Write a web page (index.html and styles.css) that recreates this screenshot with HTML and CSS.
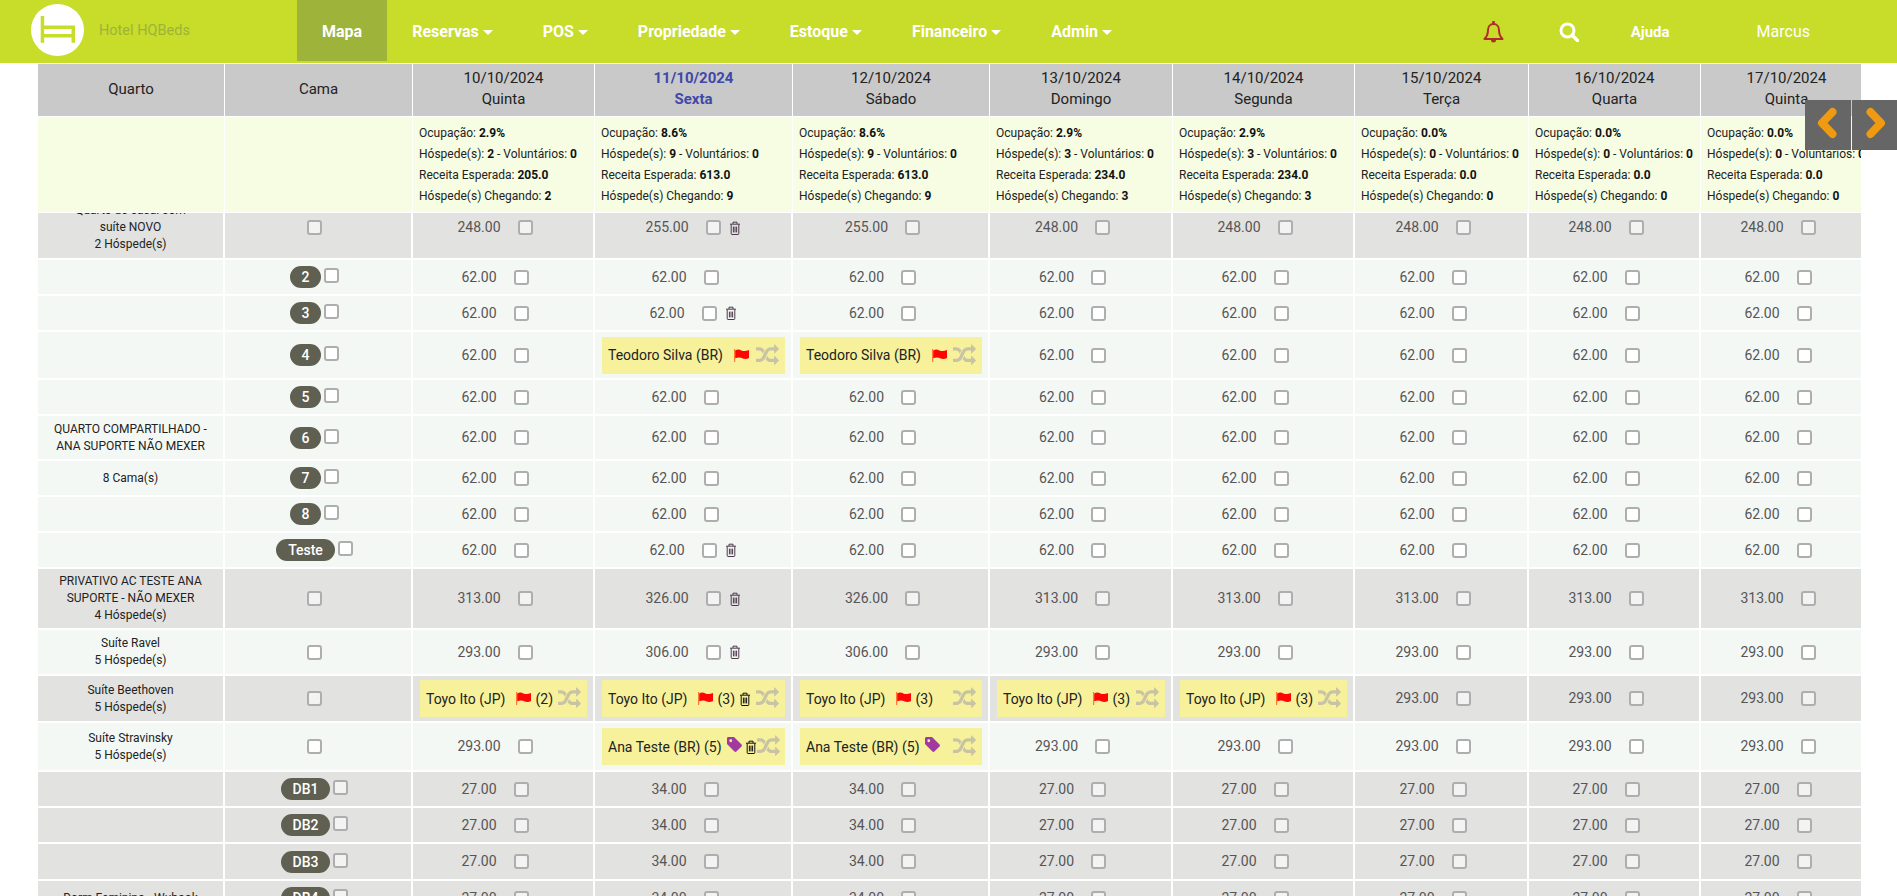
FILE: index.html
```html
<!DOCTYPE html>
<html lang="pt-BR">
<head>
<meta charset="utf-8">
<title>Hotel HQBeds - Mapa</title>
<link rel="stylesheet" href="styles.css">
</head>
<body>
<svg class="defs" aria-hidden="true">
<symbol id="i-trash" viewBox="0 0 12 14"><path d="M1 3.200h10M4 3V1.200h4V3M2.200 3.400v9.300c0 .5.3.8.8.8h6c.5 0 .8-.3.8-.8V3.400M4.400 5.600v5.800M6 5.600v5.800M7.600 5.600v5.800" fill="none" stroke="currentColor" stroke-width="1"/></symbol>
<symbol id="i-flag" viewBox="0 0 15 13"><path d="M0 0h1.200v13H0z" fill="currentColor"/><path d="M1.200 1.400c2.600-1.300 4.400-.8 6.200 0s3.900.9 7.600-.4v8c-2 1-4.400 1.200-6.300.4s-4.300-1.200-7.500-.2z" fill="#ff0606"/></symbol>
<symbol id="i-tag" viewBox="0 0 16 16"><path fill-rule="evenodd" d="M1.500 0h6l8 8c.6.6.6 1.400 0 2l-5.500 5.500c-.6.6-1.400.6-2 0l-8-8v-6C0 .7.700 0 1.500 0zM4 2.500a1.500 1.500 0 1 0 0 3 1.500 1.500 0 0 0 0-3z" fill="currentColor"/></symbol>
<symbol id="i-shuffle" viewBox="0 0 1792 1792"><path fill="currentColor" d="M666 481q-60 92-137 273-22-45-37-72.500t-40.500-63.500-51-56.500-63-35-81.500-14.500h-224q-14 0-23-9t-9-23v-192q0-14 9-23t23-9h224q250 0 410 225zm1126 799q0 14-9 23l-320 320q-9 9-23 9-13 0-22.500-9.500t-9.500-22.500v-192q-32 0-85 .5t-81 1-73-1-71-5-64-10.500-63-18.500-58-28.500-59-40-55-53.500-56-69.500q59-93 136-273 22 45 37 72.500t40.500 63.500 51 56.500 63 35 81.500 14.500h256v-192q0-14 9-23t23-9q12 0 24 10l319 319q9 9 9 23zm0-896q0 14-9 23l-320 320q-9 9-23 9-13 0-22.500-9.500t-9.500-22.500v-192h-256q-48 0-87 15t-69 45-51 61.500-45 77.500q-32 62-78 171-29 66-49.500 111t-54 105-64 100-74 83-90 68.500-106.500 42-128 16.500h-224q-14 0-23-9t-9-23v-192q0-14 9-23t23-9h224q48 0 87-15t69-45 51-61.500 45-77.500q32-62 78-171 29-66 49.500-111t54-105 64-100 74-83 90-68.500 106.500-42 128-16.500h256v-192q0-14 9-23t23-9q12 0 24 10l319 319q9 9 9 23z"/></symbol>
</svg>

<header class="nav">
  <div class="brand">
    <svg class="logo" viewBox="0 0 53 52"><ellipse cx="26.500" cy="26" rx="26.500" ry="26" fill="#fff"/><path d="M9.700 12h3.500v9.500h30.800v17.200h-3.500v-5.200H13.200v5.200H9.700zM13.200 25v5h27.300v-5z" fill="#c8dc2a"/></svg>
    <span class="hotel">Hotel HQBeds</span>
  </div>
  <nav class="menu">
    <a class="item active">Mapa</a>
    <a class="item">Reservas<i class="caret"></i></a>
    <a class="item">POS<i class="caret"></i></a>
    <a class="item">Propriedade<i class="caret"></i></a>
    <a class="item">Estoque<i class="caret"></i></a>
    <a class="item">Financeiro<i class="caret"></i></a>
    <a class="item">Admin<i class="caret"></i></a>
  </nav>
  <div class="tools">
    <svg class="bell" viewBox="0 0 21 22"><path d="M10.500 3C7 3 5 5.800 5 9c0 4-1 6.500-3.500 9h18C17 15.500 16 13 16 9c0-3.200-2-6-5.500-6z" fill="none" stroke="currentColor" stroke-width="2" stroke-linejoin="round"/><path d="M9.200 0h2.600v3H9.200zM8 19h5a2.500 2.500 0 0 1-5 0z" fill="currentColor"/></svg>
    <svg class="search" viewBox="0 0 20 20"><circle cx="8.500" cy="8.500" r="6.500" fill="none" stroke="#fff" stroke-width="3"/><path d="M13.500 13.500l5 5" stroke="#fff" stroke-width="3.500" stroke-linecap="round"/></svg>
    <a class="help">Ajuda</a>
    <a class="user">Marcus</a>
  </div>
</header>

<main class="board">
  <table class="grid head">
    <colgroup><col class="c0"><col class="c1"><col class="d1"><col class="d2"><col class="d3"><col class="d4"><col class="d5"><col class="d6"><col class="d7"><col class="d8"></colgroup>
    <tr class="titles">
      <th>Quarto</th><th>Cama</th>
      <th>10/10/2024<br>Quinta</th>
      <th class="today">11/10/2024<br>Sexta</th>
      <th>12/10/2024<br>Sábado</th>
      <th>13/10/2024<br>Domingo</th>
      <th>14/10/2024<br>Segunda</th>
      <th>15/10/2024<br>Terça</th>
      <th>16/10/2024<br>Quarta</th>
      <th>17/10/2024<br>Quinta</th>
    </tr>
    <tr class="stats">
      <td></td><td></td>
      <td>Ocupação: <b>2.9%</b><br>Hóspede(s): <b>2</b> - Voluntários: <b>0</b><br>Receita Esperada: <b>205.0</b><br>Hóspede(s) Chegando: <b>2</b></td>
      <td>Ocupação: <b>8.6%</b><br>Hóspede(s): <b>9</b> - Voluntários: <b>0</b><br>Receita Esperada: <b>613.0</b><br>Hóspede(s) Chegando: <b>9</b></td>
      <td>Ocupação: <b>8.6%</b><br>Hóspede(s): <b>9</b> - Voluntários: <b>0</b><br>Receita Esperada: <b>613.0</b><br>Hóspede(s) Chegando: <b>9</b></td>
      <td>Ocupação: <b>2.9%</b><br>Hóspede(s): <b>3</b> - Voluntários: <b>0</b><br>Receita Esperada: <b>234.0</b><br>Hóspede(s) Chegando: <b>3</b></td>
      <td>Ocupação: <b>2.9%</b><br>Hóspede(s): <b>3</b> - Voluntários: <b>0</b><br>Receita Esperada: <b>234.0</b><br>Hóspede(s) Chegando: <b>3</b></td>
      <td>Ocupação: <b>0.0%</b><br>Hóspede(s): <b>0</b> - Voluntários: <b>0</b><br>Receita Esperada: <b>0.0</b><br>Hóspede(s) Chegando: <b>0</b></td>
      <td>Ocupação: <b>0.0%</b><br>Hóspede(s): <b>0</b> - Voluntários: <b>0</b><br>Receita Esperada: <b>0.0</b><br>Hóspede(s) Chegando: <b>0</b></td>
      <td>Ocupação: <b>0.0%</b><br>Hóspede(s): <b>0</b> - Voluntários: <b>0</b><br>Receita Esperada: <b>0.0</b><br>Hóspede(s) Chegando: <b>0</b></td>
    </tr>
  </table>

  <div class="scroller">
    <table class="grid body">
      <colgroup><col class="c0"><col class="c1"><col class="d1"><col class="d2"><col class="d3"><col class="d4"><col class="d5"><col class="d6"><col class="d7"><col class="d8"></colgroup>

      <tr class="gray h63">
        <td class="room">Quarto de casal com<br>suíte NOVO<br>2 Hóspede(s)</td>
        <td><div class="bed"><input class="cb" type="checkbox"></div></td>
        <td><div class="slot"><span>248.00</span><input class="cb" type="checkbox"></div></td>
        <td><div class="slot trash"><span>255.00</span><input class="cb" type="checkbox"><svg class="ti"><use href="#i-trash"/></svg></div></td>
        <td><div class="slot"><span>255.00</span><input class="cb" type="checkbox"></div></td>
        <td><div class="slot"><span>248.00</span><input class="cb" type="checkbox"></div></td>
        <td><div class="slot"><span>248.00</span><input class="cb" type="checkbox"></div></td>
        <td><div class="slot"><span>248.00</span><input class="cb" type="checkbox"></div></td>
        <td><div class="slot"><span>248.00</span><input class="cb" type="checkbox"></div></td>
        <td><div class="slot"><span>248.00</span><input class="cb" type="checkbox"></div></td>
      </tr>

      <tr class="light h36">
        <td class="room"></td>
        <td><div class="bed"><span class="badge">2</span><input class="cb" type="checkbox"></div></td>
        <td><div class="slot"><span>62.00</span><input class="cb" type="checkbox"></div></td>
        <td><div class="slot"><span>62.00</span><input class="cb" type="checkbox"></div></td>
        <td><div class="slot"><span>62.00</span><input class="cb" type="checkbox"></div></td>
        <td><div class="slot"><span>62.00</span><input class="cb" type="checkbox"></div></td>
        <td><div class="slot"><span>62.00</span><input class="cb" type="checkbox"></div></td>
        <td><div class="slot"><span>62.00</span><input class="cb" type="checkbox"></div></td>
        <td><div class="slot"><span>62.00</span><input class="cb" type="checkbox"></div></td>
        <td><div class="slot"><span>62.00</span><input class="cb" type="checkbox"></div></td>
      </tr>

      <tr class="light h36">
        <td class="room"></td>
        <td><div class="bed"><span class="badge">3</span><input class="cb" type="checkbox"></div></td>
        <td><div class="slot"><span>62.00</span><input class="cb" type="checkbox"></div></td>
        <td><div class="slot trash"><span>62.00</span><input class="cb" type="checkbox"><svg class="ti"><use href="#i-trash"/></svg></div></td>
        <td><div class="slot"><span>62.00</span><input class="cb" type="checkbox"></div></td>
        <td><div class="slot"><span>62.00</span><input class="cb" type="checkbox"></div></td>
        <td><div class="slot"><span>62.00</span><input class="cb" type="checkbox"></div></td>
        <td><div class="slot"><span>62.00</span><input class="cb" type="checkbox"></div></td>
        <td><div class="slot"><span>62.00</span><input class="cb" type="checkbox"></div></td>
        <td><div class="slot"><span>62.00</span><input class="cb" type="checkbox"></div></td>
      </tr>

      <tr class="light h48">
        <td class="room"></td>
        <td><div class="bed"><span class="badge">4</span><input class="cb" type="checkbox"></div></td>
        <td><div class="slot"><span>62.00</span><input class="cb" type="checkbox"></div></td>
        <td class="bk-cell"><div class="bk"><span>Teodoro Silva (BR)</span><svg class="fl"><use href="#i-flag"/></svg><svg class="sh"><use href="#i-shuffle"/></svg></div></td>
        <td class="bk-cell"><div class="bk"><span>Teodoro Silva (BR)</span><svg class="fl"><use href="#i-flag"/></svg><svg class="sh"><use href="#i-shuffle"/></svg></div></td>
        <td><div class="slot"><span>62.00</span><input class="cb" type="checkbox"></div></td>
        <td><div class="slot"><span>62.00</span><input class="cb" type="checkbox"></div></td>
        <td><div class="slot"><span>62.00</span><input class="cb" type="checkbox"></div></td>
        <td><div class="slot"><span>62.00</span><input class="cb" type="checkbox"></div></td>
        <td><div class="slot"><span>62.00</span><input class="cb" type="checkbox"></div></td>
      </tr>

      <tr class="light h36">
        <td class="room"></td>
        <td><div class="bed"><span class="badge">5</span><input class="cb" type="checkbox"></div></td>
        <td><div class="slot"><span>62.00</span><input class="cb" type="checkbox"></div></td>
        <td><div class="slot"><span>62.00</span><input class="cb" type="checkbox"></div></td>
        <td><div class="slot"><span>62.00</span><input class="cb" type="checkbox"></div></td>
        <td><div class="slot"><span>62.00</span><input class="cb" type="checkbox"></div></td>
        <td><div class="slot"><span>62.00</span><input class="cb" type="checkbox"></div></td>
        <td><div class="slot"><span>62.00</span><input class="cb" type="checkbox"></div></td>
        <td><div class="slot"><span>62.00</span><input class="cb" type="checkbox"></div></td>
        <td><div class="slot"><span>62.00</span><input class="cb" type="checkbox"></div></td>
      </tr>

      <tr class="light h45">
        <td class="room">QUARTO COMPARTILHADO -<br>ANA SUPORTE NÃO MEXER</td>
        <td><div class="bed"><span class="badge">6</span><input class="cb" type="checkbox"></div></td>
        <td><div class="slot"><span>62.00</span><input class="cb" type="checkbox"></div></td>
        <td><div class="slot"><span>62.00</span><input class="cb" type="checkbox"></div></td>
        <td><div class="slot"><span>62.00</span><input class="cb" type="checkbox"></div></td>
        <td><div class="slot"><span>62.00</span><input class="cb" type="checkbox"></div></td>
        <td><div class="slot"><span>62.00</span><input class="cb" type="checkbox"></div></td>
        <td><div class="slot"><span>62.00</span><input class="cb" type="checkbox"></div></td>
        <td><div class="slot"><span>62.00</span><input class="cb" type="checkbox"></div></td>
        <td><div class="slot"><span>62.00</span><input class="cb" type="checkbox"></div></td>
      </tr>

      <tr class="light h36">
        <td class="room">8 Cama(s)</td>
        <td><div class="bed"><span class="badge">7</span><input class="cb" type="checkbox"></div></td>
        <td><div class="slot"><span>62.00</span><input class="cb" type="checkbox"></div></td>
        <td><div class="slot"><span>62.00</span><input class="cb" type="checkbox"></div></td>
        <td><div class="slot"><span>62.00</span><input class="cb" type="checkbox"></div></td>
        <td><div class="slot"><span>62.00</span><input class="cb" type="checkbox"></div></td>
        <td><div class="slot"><span>62.00</span><input class="cb" type="checkbox"></div></td>
        <td><div class="slot"><span>62.00</span><input class="cb" type="checkbox"></div></td>
        <td><div class="slot"><span>62.00</span><input class="cb" type="checkbox"></div></td>
        <td><div class="slot"><span>62.00</span><input class="cb" type="checkbox"></div></td>
      </tr>

      <tr class="light h36">
        <td class="room"></td>
        <td><div class="bed"><span class="badge">8</span><input class="cb" type="checkbox"></div></td>
        <td><div class="slot"><span>62.00</span><input class="cb" type="checkbox"></div></td>
        <td><div class="slot"><span>62.00</span><input class="cb" type="checkbox"></div></td>
        <td><div class="slot"><span>62.00</span><input class="cb" type="checkbox"></div></td>
        <td><div class="slot"><span>62.00</span><input class="cb" type="checkbox"></div></td>
        <td><div class="slot"><span>62.00</span><input class="cb" type="checkbox"></div></td>
        <td><div class="slot"><span>62.00</span><input class="cb" type="checkbox"></div></td>
        <td><div class="slot"><span>62.00</span><input class="cb" type="checkbox"></div></td>
        <td><div class="slot"><span>62.00</span><input class="cb" type="checkbox"></div></td>
      </tr>

      <tr class="light h36">
        <td class="room"></td>
        <td><div class="bed"><span class="badge">Teste</span><input class="cb" type="checkbox"></div></td>
        <td><div class="slot"><span>62.00</span><input class="cb" type="checkbox"></div></td>
        <td><div class="slot trash"><span>62.00</span><input class="cb" type="checkbox"><svg class="ti"><use href="#i-trash"/></svg></div></td>
        <td><div class="slot"><span>62.00</span><input class="cb" type="checkbox"></div></td>
        <td><div class="slot"><span>62.00</span><input class="cb" type="checkbox"></div></td>
        <td><div class="slot"><span>62.00</span><input class="cb" type="checkbox"></div></td>
        <td><div class="slot"><span>62.00</span><input class="cb" type="checkbox"></div></td>
        <td><div class="slot"><span>62.00</span><input class="cb" type="checkbox"></div></td>
        <td><div class="slot"><span>62.00</span><input class="cb" type="checkbox"></div></td>
      </tr>

      <tr class="gray h61">
        <td class="room">PRIVATIVO AC TESTE ANA<br>SUPORTE - NÃO MEXER<br>4 Hóspede(s)</td>
        <td><div class="bed"><input class="cb" type="checkbox"></div></td>
        <td><div class="slot"><span>313.00</span><input class="cb" type="checkbox"></div></td>
        <td><div class="slot trash"><span>326.00</span><input class="cb" type="checkbox"><svg class="ti"><use href="#i-trash"/></svg></div></td>
        <td><div class="slot"><span>326.00</span><input class="cb" type="checkbox"></div></td>
        <td><div class="slot"><span>313.00</span><input class="cb" type="checkbox"></div></td>
        <td><div class="slot"><span>313.00</span><input class="cb" type="checkbox"></div></td>
        <td><div class="slot"><span>313.00</span><input class="cb" type="checkbox"></div></td>
        <td><div class="slot"><span>313.00</span><input class="cb" type="checkbox"></div></td>
        <td><div class="slot"><span>313.00</span><input class="cb" type="checkbox"></div></td>
      </tr>

      <tr class="light h46">
        <td class="room">Suíte Ravel<br>5 Hóspede(s)</td>
        <td><div class="bed"><input class="cb" type="checkbox"></div></td>
        <td><div class="slot"><span>293.00</span><input class="cb" type="checkbox"></div></td>
        <td><div class="slot trash"><span>306.00</span><input class="cb" type="checkbox"><svg class="ti"><use href="#i-trash"/></svg></div></td>
        <td><div class="slot"><span>306.00</span><input class="cb" type="checkbox"></div></td>
        <td><div class="slot"><span>293.00</span><input class="cb" type="checkbox"></div></td>
        <td><div class="slot"><span>293.00</span><input class="cb" type="checkbox"></div></td>
        <td><div class="slot"><span>293.00</span><input class="cb" type="checkbox"></div></td>
        <td><div class="slot"><span>293.00</span><input class="cb" type="checkbox"></div></td>
        <td><div class="slot"><span>293.00</span><input class="cb" type="checkbox"></div></td>
      </tr>

      <tr class="gray h47">
        <td class="room">Suíte Beethoven<br>5 Hóspede(s)</td>
        <td><div class="bed"><input class="cb" type="checkbox"></div></td>
        <td class="bk-cell"><div class="bk"><span>Toyo Ito (JP)</span><svg class="fl"><use href="#i-flag"/></svg><span class="count">(2)</span><svg class="sh"><use href="#i-shuffle"/></svg></div></td>
        <td class="bk-cell"><div class="bk"><span>Toyo Ito (JP)</span><svg class="fl"><use href="#i-flag"/></svg><span class="count">(3)</span><svg class="ti dark"><use href="#i-trash"/></svg><svg class="sh"><use href="#i-shuffle"/></svg></div></td>
        <td class="bk-cell"><div class="bk"><span>Toyo Ito (JP)</span><svg class="fl"><use href="#i-flag"/></svg><span class="count">(3)</span><svg class="sh"><use href="#i-shuffle"/></svg></div></td>
        <td class="bk-cell"><div class="bk"><span>Toyo Ito (JP)</span><svg class="fl"><use href="#i-flag"/></svg><span class="count">(3)</span><svg class="sh"><use href="#i-shuffle"/></svg></div></td>
        <td class="bk-cell"><div class="bk"><span>Toyo Ito (JP)</span><svg class="fl"><use href="#i-flag"/></svg><span class="count">(3)</span><svg class="sh"><use href="#i-shuffle"/></svg></div></td>
        <td><div class="slot"><span>293.00</span><input class="cb" type="checkbox"></div></td>
        <td><div class="slot"><span>293.00</span><input class="cb" type="checkbox"></div></td>
        <td><div class="slot"><span>293.00</span><input class="cb" type="checkbox"></div></td>
      </tr>

      <tr class="light h49">
        <td class="room">Suíte Stravinsky<br>5 Hóspede(s)</td>
        <td><div class="bed"><input class="cb" type="checkbox"></div></td>
        <td><div class="slot"><span>293.00</span><input class="cb" type="checkbox"></div></td>
        <td class="bk-cell"><div class="bk"><span>Ana Teste (BR) (5)</span><svg class="tg"><use href="#i-tag"/></svg><svg class="ti dark near"><use href="#i-trash"/></svg><svg class="sh"><use href="#i-shuffle"/></svg></div></td>
        <td class="bk-cell"><div class="bk"><span>Ana Teste (BR) (5)</span><svg class="tg"><use href="#i-tag"/></svg><svg class="sh"><use href="#i-shuffle"/></svg></div></td>
        <td><div class="slot"><span>293.00</span><input class="cb" type="checkbox"></div></td>
        <td><div class="slot"><span>293.00</span><input class="cb" type="checkbox"></div></td>
        <td><div class="slot"><span>293.00</span><input class="cb" type="checkbox"></div></td>
        <td><div class="slot"><span>293.00</span><input class="cb" type="checkbox"></div></td>
        <td><div class="slot"><span>293.00</span><input class="cb" type="checkbox"></div></td>
      </tr>

      <tr class="gray h36">
        <td class="room"></td>
        <td><div class="bed"><span class="badge">DB1</span><input class="cb" type="checkbox"></div></td>
        <td><div class="slot"><span>27.00</span><input class="cb" type="checkbox"></div></td>
        <td><div class="slot"><span>34.00</span><input class="cb" type="checkbox"></div></td>
        <td><div class="slot"><span>34.00</span><input class="cb" type="checkbox"></div></td>
        <td><div class="slot"><span>27.00</span><input class="cb" type="checkbox"></div></td>
        <td><div class="slot"><span>27.00</span><input class="cb" type="checkbox"></div></td>
        <td><div class="slot"><span>27.00</span><input class="cb" type="checkbox"></div></td>
        <td><div class="slot"><span>27.00</span><input class="cb" type="checkbox"></div></td>
        <td><div class="slot"><span>27.00</span><input class="cb" type="checkbox"></div></td>
      </tr>

      <tr class="gray h36">
        <td class="room"></td>
        <td><div class="bed"><span class="badge">DB2</span><input class="cb" type="checkbox"></div></td>
        <td><div class="slot"><span>27.00</span><input class="cb" type="checkbox"></div></td>
        <td><div class="slot"><span>34.00</span><input class="cb" type="checkbox"></div></td>
        <td><div class="slot"><span>34.00</span><input class="cb" type="checkbox"></div></td>
        <td><div class="slot"><span>27.00</span><input class="cb" type="checkbox"></div></td>
        <td><div class="slot"><span>27.00</span><input class="cb" type="checkbox"></div></td>
        <td><div class="slot"><span>27.00</span><input class="cb" type="checkbox"></div></td>
        <td><div class="slot"><span>27.00</span><input class="cb" type="checkbox"></div></td>
        <td><div class="slot"><span>27.00</span><input class="cb" type="checkbox"></div></td>
      </tr>

      <tr class="gray h37">
        <td class="room"></td>
        <td><div class="bed"><span class="badge">DB3</span><input class="cb" type="checkbox"></div></td>
        <td><div class="slot"><span>27.00</span><input class="cb" type="checkbox"></div></td>
        <td><div class="slot"><span>34.00</span><input class="cb" type="checkbox"></div></td>
        <td><div class="slot"><span>34.00</span><input class="cb" type="checkbox"></div></td>
        <td><div class="slot"><span>27.00</span><input class="cb" type="checkbox"></div></td>
        <td><div class="slot"><span>27.00</span><input class="cb" type="checkbox"></div></td>
        <td><div class="slot"><span>27.00</span><input class="cb" type="checkbox"></div></td>
        <td><div class="slot"><span>27.00</span><input class="cb" type="checkbox"></div></td>
        <td><div class="slot"><span>27.00</span><input class="cb" type="checkbox"></div></td>
      </tr>

      <tr class="gray h36">
        <td class="room">Dorm Feminino - Wubook</td>
        <td><div class="bed"><span class="badge">DB4</span><input class="cb" type="checkbox"></div></td>
        <td><div class="slot"><span>27.00</span><input class="cb" type="checkbox"></div></td>
        <td><div class="slot"><span>34.00</span><input class="cb" type="checkbox"></div></td>
        <td><div class="slot"><span>34.00</span><input class="cb" type="checkbox"></div></td>
        <td><div class="slot"><span>27.00</span><input class="cb" type="checkbox"></div></td>
        <td><div class="slot"><span>27.00</span><input class="cb" type="checkbox"></div></td>
        <td><div class="slot"><span>27.00</span><input class="cb" type="checkbox"></div></td>
        <td><div class="slot"><span>27.00</span><input class="cb" type="checkbox"></div></td>
        <td><div class="slot"><span>27.00</span><input class="cb" type="checkbox"></div></td>
      </tr>
    </table>
  </div>
</main>

<div class="pager">
  <button class="page-btn" type="button" aria-label="Anterior"><svg viewBox="0 0 46 50"><path d="M27.500 12L17 23l10.500 11"/></svg></button>
  <button class="page-btn" type="button" aria-label="Próximo"><svg viewBox="0 0 45 50"><path d="M18.500 12L29 23 18.500 34"/></svg></button>
</div>
</body>
</html>
```
FILE: styles.css
```css
* { box-sizing: border-box; }
html, body { margin: 0; height: 896px; overflow: hidden; background: #fff; }
body { font-family: Roboto, "Liberation Sans", sans-serif; color: #222; font-size: 14px; display: flex; flex-direction: column; }
.defs { width: 0; height: 0; position: absolute; }

/* top bar */
.nav { height: 63px; flex: none; background: #c8dc2a; display: flex; align-items: center; color: #fff; }
.brand { width: 297px; flex: none; display: flex; align-items: center; padding-left: 31px; }
.logo { width: 53px; height: 52px; margin-top: -3px; }
.hotel { margin-left: 15px; font-size: 14.5px; color: #9db33a; margin-top: -3px; }
.menu { display: flex; height: 63px; }
.item { display: flex; align-items: center; padding: 0 25px; font-size: 16px; font-weight: 700; height: 63px; }
.item.active { background: #9db33a; height: 61px; padding: 2px 25px 0; }
.caret { width: 0; height: 0; margin-left: 4px; border-left: 5px solid transparent; border-right: 5px solid transparent; border-top: 5px solid #fff; margin-top: 2px; }
.tools { margin-left: auto; display: flex; align-items: center; padding-right: 87px; }
.bell { width: 21px; height: 22px; color: #b02c2c; }
.search { width: 20px; height: 20px; margin-left: 55px; }
.help { margin-left: 52px; font-size: 15px; font-weight: 700; }
.user { margin-left: 87px; font-size: 16px; }

/* board */
.board { margin: 1px 36px 0 38px; flex: 1; min-height: 0; display: flex; flex-direction: column; overflow: hidden; }
.grid { border-collapse: separate; border-spacing: 0; table-layout: fixed; width: 1834px; flex: none; }
.c0 { width: 186px; } .c1 { width: 188px; } .d1 { width: 182px; } .d2 { width: 198px; } .d3 { width: 197px; }
.d4 { width: 183px; } .d5 { width: 182px; } .d6 { width: 174px; } .d7 { width: 172px; } .d8 { width: 172px; }

.head { position: relative; z-index: 1; }
.titles th { height: 53px; background: #c9c9c9; font-weight: 400; font-size: 15px; line-height: 21px; text-align: center; padding: 0 0 2px; border-left: 1px solid #fff; border-bottom: 1px solid #fff; }
.titles th:first-child { border-left: 0; }
.titles .today { color: #4048a8; font-weight: 700; }
.stats td { height: 95px; background: #f6fde3; font-size: 12px; line-height: 21px; padding: 6px 0 0 6px; border-left: 1px solid #fff; white-space: nowrap; overflow: hidden; vertical-align: top; }
.stats td:first-child { border-left: 0; }
.stats b { font-weight: 700; color: #111; }

.scroller { flex: 1; min-height: 0; overflow: hidden; margin-top: 1px; }
.body { margin-top: -16px; }
.body td { border-left: 1px solid #fff; border-right: 1px solid #fff; border-bottom: 2px solid #fff; padding: 0; text-align: center; vertical-align: middle; }
.body td:first-child { border-left: 0; }
.gray td { background: #e2e2e1; }
.light td { background: #f4f8f5; }
.h36 td { height: 36px; } .h37 td { height: 37px; } .h45 td { height: 45px; } .h46 td { height: 46px; }
.h47 td { height: 47px; } .h48 td { height: 48px; } .h49 td { height: 49px; } .h61 td { height: 61px; } .h63 td { height: 63px; }

.room { font-size: 12px; line-height: 17px; color: #222; white-space: nowrap; }
.bed { display: flex; justify-content: center; align-items: flex-start; gap: 3px; padding-right: 7px; }
.badge { background: #5f5f52; color: #fff; height: 22px; line-height: 22px; padding: 0 12px; border-radius: 11px; font-weight: 500; font-size: 14px; }
.bed .badge + .cb { margin-top: 2px; }

.cb { appearance: none; -webkit-appearance: none; flex: none; width: 15px; height: 15px; margin: 0; background: #fff; border: 2px solid #aeaeae; border-radius: 3px; }
.gray .cb { background: #f3f3f3; }

.slot { display: flex; justify-content: center; align-items: center; padding-right: 16px; font-size: 14px; color: #555; line-height: 17px; }
.slot .cb { margin-left: 17px; }
.slot.trash { padding-right: 0; }
.ti { width: 12px; height: 14px; margin-left: 8px; color: #4a3a4a; flex: none; }
.ti.dark { color: #111; margin-left: 4px; }
.ti.near { margin-left: 3px; }

.body .bk-cell { padding: 0 6px 0 7px; }
.bk { height: 37px; background: #f7f19b; display: flex; align-items: center; padding: 0 6px; font-size: 14px; color: #222; white-space: nowrap; }
.fl { width: 15px; height: 13px; margin-left: 11px; color: #ff7a30; flex: none; }
.count { margin-left: 4px; }
.tg { width: 15px; height: 15px; margin-left: 5px; color: #a03aa0; flex: none; margin-top: -4px; }
.sh { width: 23px; height: 23px; margin-left: auto; color: #c9c3a6; flex: none; }

/* week pager floats over the grid */
.pager { position: absolute; top: 100px; left: 1805px; display: flex; gap: 1px; z-index: 2; }
.page-btn { width: 46px; height: 50px; padding: 0; border: 0; background: #666; display: block; }
.page-btn + .page-btn { width: 45px; }
.page-btn svg { display: block; width: 100%; height: 100%; }
.page-btn path { fill: none; stroke: #f09a12; stroke-width: 8; stroke-linecap: round; stroke-linejoin: round; }
```
